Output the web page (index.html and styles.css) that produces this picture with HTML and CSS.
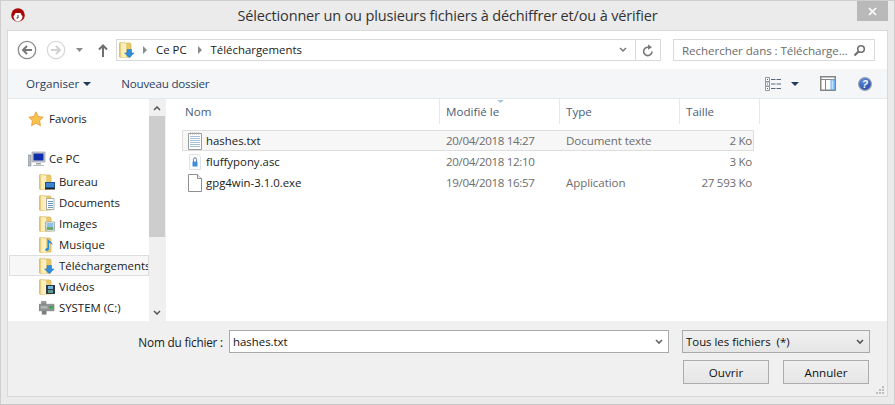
FILE: index.html
```html
<!DOCTYPE html>
<html lang="fr">
<head>
<meta charset="utf-8">
<title>Sélectionner</title>
<link rel="stylesheet" href="styles.css">
</head>
<body>
<svg class="defs" width="0" height="0">
  <defs>
    <linearGradient id="fold" x1="0" y1="0" x2="1" y2="0"><stop offset="0" stop-color="#e6c66c"/><stop offset=".25" stop-color="#f9ebb4"/><stop offset="1" stop-color="#fdf3c8"/></linearGradient>
    <radialGradient id="helpg" cx=".4" cy=".3" r=".8"><stop offset="0" stop-color="#5f8fe0"/><stop offset="1" stop-color="#1c3f9c"/></radialGradient>
    <symbol id="folder" viewBox="0 0 16 16">
      <path d="M.5 1h10.500l1 1v13H.5z" fill="#ebc968" stroke="#d3b257" stroke-width=".7"/>
      <path d="M1 0l6.500 1.500V16L1 15.500z" fill="url(#fold)" stroke="#dcc06c" stroke-width=".5"/>
    </symbol>
    <symbol id="dlarrow" viewBox="0 0 16 16">
      <path d="M8 7.500h4.500v3.500H15l-4.700 4.700L5.600 11H8z" fill="#2f8fdc" stroke="#1f6fb5" stroke-width=".5"/>
    </symbol>
  </defs>
</svg>
<div class="window">
  <header class="titlebar">
    <div class="appicon">
      <svg width="14" height="14" viewBox="0 0 14 14"><circle cx="7" cy="7" r="6.800" fill="#a80808"/><path d="M2.500 8c1-.5 1.500-2 2-3h5c.5 1 1 2.500 2 3 0 3-2 5.500-4.500 5.500S2.500 11 2.500 8z" fill="#fff"/><path d="M7 7v3H5.500" stroke="#333" fill="none"/></svg>
    </div>
    <h1 class="title">Sélectionner un ou plusieurs fichiers à déchiffrer et/ou à vérifier</h1>
    <div class="closewrap"><button class="close"><svg width="9" height="9" viewBox="0 0 9 9"><path d="M1 1l7 7M8 1 1 8" stroke="#fff" stroke-width="1.700"/></svg></button></div>
  </header>
  <main class="panel">
    <nav class="navbar">
      <svg class="navbtn" width="20" height="20" viewBox="0 0 20 20"><circle cx="10" cy="10" r="8.700" fill="#fff" stroke="#8a8a8a" stroke-width="1.300"/><path d="M15 10H6M10 6 6 10l4 4" fill="none" stroke="#777" stroke-width="2"/></svg>
      <svg class="navbtn fwd" width="20" height="20" viewBox="0 0 20 20"><circle cx="10" cy="10" r="8.700" fill="#fff" stroke="#d8d8d8" stroke-width="1.300"/><path d="M5 10h9M10 6l4 4-4 4" fill="none" stroke="#d2d2d2" stroke-width="2"/></svg>
      <svg class="navdrop" width="7" height="4" viewBox="0 0 7 4"><path d="M0 0h7L3.500 4z" fill="#8a8a8a"/></svg>
      <svg class="navup" width="10" height="13" viewBox="0 0 10 13"><path d="M5 13V2M1 5.500 5 1.500l4 4" fill="none" stroke="#6f6f6f" stroke-width="2"/></svg>
      <div class="address">
        <svg class="addr-ico" width="16" height="16"><use href="#folder"/><use href="#dlarrow"/></svg>
        <span class="crumb-arrow"></span>
        <span class="crumb">Ce PC</span>
        <span class="crumb-arrow"></span>
        <span class="crumb">Téléchargements</span>
        <span class="spacer"></span>
        <svg class="addr-chev" width="8" height="6" viewBox="0 0 8 6"><path d="M1 1l3 3 3-3" fill="none" stroke="#777" stroke-width="1.500"/></svg>
        <span class="refresh"><svg width="12" height="13" viewBox="0 0 12 13"><path d="M10 7.500A4.200 4.200 0 1 1 6 3.200" fill="none" stroke="#777" stroke-width="1.600"/><path d="M6 0.500 10 3.200 6 5.800z" fill="#777"/></svg></span>
      </div>
      <div class="search">
        <span class="search-text">Rechercher dans : Télécharge...</span>
        <svg width="13" height="13" viewBox="0 0 13 13"><circle cx="8" cy="5" r="3.300" fill="none" stroke="#6f6f6f" stroke-width="1.600"/><path d="M5.500 7.500 1.500 11.500" stroke="#6f6f6f" stroke-width="2.200"/></svg>
      </div>
    </nav>
    <div class="toolbar">
      <span class="tool">Organiser</span>
      <svg class="tool-caret" width="8" height="4" viewBox="0 0 8 4"><path d="M0 0h8L4 4z" fill="#1e3a5f"/></svg>
      <span class="tool new">Nouveau dossier</span>
      <span class="spacer"></span>
      <svg class="viewico" width="16" height="14" viewBox="0 0 16 14"><path d="M.5.500h4v4h-4zM.5 5h4v4h-4zM.5 9.500h4v4h-4z" fill="#fff" stroke="#8795a5"/><path d="M6 2.500h10M6 7h10M6 11.500h10" stroke="#55677c" stroke-dasharray="4.500 1"/><path d="M2 2h1v1H2zM2 6.500h1v1H2zM2 11h1v1H2z" fill="#c33"/></svg>
      <svg class="view-caret" width="8" height="4" viewBox="0 0 8 4"><path d="M0 0h8L4 4z" fill="#1e3a5f"/></svg>
      <svg class="paneico" width="16" height="15" viewBox="0 0 16 15"><path d="M.75.750h14.500v13.500H.75z" fill="#fff" stroke="#858585" stroke-width="1.500"/><path d="M1 3.500h14M5.500 3.500V14" stroke="#858585"/><path d="M10.500 3.500h4.500V14h-4.500z" fill="#6cb2ee"/><path d="M11.500 4.500h2V13h-2z" fill="#bfe0fa"/></svg>
      <svg class="helpico" width="14" height="14" viewBox="0 0 14 14"><circle cx="7" cy="7" r="6.400" fill="url(#helpg)" stroke="#9aa3b8" stroke-width="1.200"/><text x="7" y="10.500" class="helptext" text-anchor="middle">?</text></svg>
    </div>
    <div class="content">
      <aside class="sidebar">
        <ul class="tree">
          <li class="tree-row fav"><svg width="16" height="16" viewBox="0 0 16 16"><path d="M8 .8l2.200 4.700 5 .7-3.600 3.500.9 5L8 12.300l-4.500 2.400.9-5L.8 6.200l5-.7z" fill="#f8c04c" stroke="#e59a35" stroke-width=".8"/></svg><span>Favoris</span></li>
          <li class="tree-row pc"><svg width="18" height="16" viewBox="0 0 18 16"><path d="M0 4h3v11H0z" fill="#b9bfc4" stroke="#70767c" stroke-width=".5"/><path d="M4 1h13v10H4z" fill="#c9ced4" stroke="#8f969d" stroke-width=".6"/><path d="M5.500 2.500h10v7h-10z" fill="#0e2da8"/><path d="M8 12h5v1.500H8z" fill="#9aa1a8"/><path d="M5 14h11v1H5z" fill="#b5bbc1"/></svg><span>Ce PC</span></li>
          <li class="tree-row sub"><svg width="16" height="16"><use href="#folder"/><path d="M6 8h10v6H6z" fill="#1e4f8f"/><path d="M7 9h8v4H7z" fill="#3d86cc"/><path d="M6 14h10v1.500H6z" fill="#222"/></svg><span>Bureau</span></li>
          <li class="tree-row sub"><svg width="16" height="16"><use href="#folder"/><path d="M7.500 3.500h7.500v11H7.500z" fill="#fff" stroke="#8a8f95" stroke-width=".7"/><path d="M9 6.500h5M9 8.500h5M9 10.500h5M9 12.500h5" stroke="#6f96bd"/></svg><span>Documents</span></li>
          <li class="tree-row sub"><svg width="16" height="16"><use href="#folder"/><path d="M6.500 6h9v9h-9z" fill="#fff" stroke="#8a8f95" stroke-width=".7"/><path d="M7.500 7h7v4h-7z" fill="#8ec3e8"/><path d="M7.500 11h7v3h-7z" fill="#6fa86a"/></svg><span>Images</span></li>
          <li class="tree-row sub"><svg width="16" height="16"><use href="#folder"/><path d="M10 1.500v10.500c0 1.500-2.500 2.500-3.500 1.500S7 11 8.500 11V1.500c1 2 5.500 3.500 5 7-.5-1.500-2-2.500-3.500-2.800z" fill="#2a8bd6"/></svg><span>Musique</span></li>
          <li class="tree-row sub selected"><svg width="16" height="16"><use href="#folder"/><use href="#dlarrow"/></svg><span class="clip">Téléchargements</span></li>
          <li class="tree-row sub"><svg width="16" height="16"><use href="#folder"/><path d="M7 6h9v9H7z" fill="#2d3a45"/><path d="M9 7h5v3H9z" fill="#6fb3dc"/><path d="M9 11h5v3H9z" fill="#5a9a8f"/></svg><span>Vidéos</span></li>
          <li class="tree-row sub drive"><svg width="16" height="16" viewBox="0 0 17 16"><path d="M2.500 1h5v3h-5z" fill="#9a9a9a" stroke="#6a6a6a" stroke-width=".5"/><path d="M0 4h16v7H0z" fill="#8f9494" stroke="#6a6a6a" stroke-width=".5"/><path d="M11 6h4v2.500h-4z" fill="#3aa64a"/><path d="M2 6h7v2.500H2z" fill="#b5b8b8"/><path d="M3 11h5v4H3z" fill="#7a7f7f"/></svg><span>SYSTEM (C:)</span></li>
        </ul>
        <div class="scrollbar">
          <svg class="sb-arrow" width="8" height="5" viewBox="0 0 8 5"><path d="M1 4l3-3 3 3" fill="none" stroke="#555" stroke-width="1.500"/></svg>
          <div class="thumb"></div>
          <span class="spacer"></span>
          <svg class="sb-arrow low" width="8" height="5" viewBox="0 0 8 5"><path d="M1 1l3 3 3-3" fill="none" stroke="#555" stroke-width="1.500"/></svg>
        </div>
      </aside>
      <section class="files">
        <div class="cols head">
          <div class="th name">Nom</div>
          <div class="th date"><svg class="sortmark" width="7" height="3" viewBox="0 0 7 3"><path d="M0 0h7L3.500 3z" fill="#a9c7e2"/></svg>Modifié le</div>
          <div class="th type">Type</div>
          <div class="th size">Taille</div>
        </div>
        <div class="rows">
          <div class="cols row selected">
            <div class="td name"><svg width="16" height="18" viewBox="0 0 16 18"><path d="M1.500 1.500h13v16h-13z" fill="#fff" stroke="#9a9a9a"/><path d="M3 4.500h10M3 6.500h10M3 8.500h10M3 10.500h10M3 12.500h10M3 14.500h10" stroke="#a5c0dc"/><path d="M3 1.500h10" stroke="#a8a8a8" stroke-dasharray="1 1" stroke-width="2"/></svg><span>hashes.txt</span></div>
            <div class="td date">20/04/2018 14:27</div>
            <div class="td type">Document texte</div>
            <div class="td size">2 Ko</div>
          </div>
          <div class="cols row">
            <div class="td name"><svg width="16" height="16" viewBox="0 0 16 16"><path d="M2.500.5h9l2 2v13h-11z" fill="#fbfbfb" stroke="#dde2e6"/><path d="M5.500 7.500h5v5h-5z" fill="#3b8fd6"/><path d="M6.500 7.500V5.300a1.500 1.500 0 0 1 3 0v2.200" fill="none" stroke="#5f7d98" stroke-width="1"/></svg><span>fluffypony.asc</span></div>
            <div class="td date">20/04/2018 12:10</div>
            <div class="td type"></div>
            <div class="td size">3 Ko</div>
          </div>
          <div class="cols row">
            <div class="td name"><svg width="16" height="18" viewBox="0 0 16 18"><path d="M1.500.5h9l4 4v13h-13z" fill="#fff" stroke="#8f8f8f"/><path d="M10.500.5v4h4" fill="#eee" stroke="#8f8f8f"/></svg><span>gpg4win-3.1.0.exe</span></div>
            <div class="td date">19/04/2018 16:57</div>
            <div class="td type">Application</div>
            <div class="td size">27 593 Ko</div>
          </div>
        </div>
      </section>
    </div>
    <footer class="bottom">
      <div class="file-row">
        <label class="file-label">Nom du fichier :</label>
        <div class="combo input"><span class="combo-text">hashes.txt</span><svg width="8" height="6" viewBox="0 0 8 6"><path d="M1 1l3 3 3-3" fill="none" stroke="#666" stroke-width="1.600"/></svg></div>
        <div class="combo filter"><span class="combo-text">Tous les fichiers&nbsp; (*)</span><svg width="8" height="6" viewBox="0 0 8 6"><path d="M1 1l3 3 3-3" fill="none" stroke="#555" stroke-width="1.600"/></svg></div>
      </div>
      <div class="btn-row">
        <button class="btn">Ouvrir</button>
        <button class="btn">Annuler</button>
      </div>
      <svg class="grip" width="10" height="10" viewBox="0 0 10 10"><path d="M7 1h2v2H7zM4 4h2v2H4zM7 4h2v2H7zM1 7h2v2H1zM4 7h2v2H4zM7 7h2v2H7z" fill="#bdbdbd"/></svg>
    </footer>
  </main>
</div>
</body>
</html>
```
FILE: styles.css
```css
* { box-sizing: border-box; }
html, body { margin: 0; padding: 0; }
body { width: 895px; height: 405px; overflow: hidden; font-family: "Open Sans", "Noto Sans", sans-serif; font-size: 12px; color: #111; background: #ebebeb; }
.defs { position: absolute; }
svg { display: block; flex: none; }
.window { width: 895px; height: 405px; display: flex; flex-direction: column; background: #ebebeb; border: 1px solid #cfcfcf; border-bottom-color: #c8c8c8; padding: 0 6px 7px 6px; }
.titlebar { height: 29px; display: grid; grid-template-columns: 1fr auto 1fr; align-items: center; flex: none; }
.appicon { padding-left: 4px; margin-top: -1px; }
.title { margin: 1px 0 0; font-weight: 400; font-size: 14.5px; letter-spacing: -.16px; color: #333; line-height: 20px; white-space: nowrap; }
.closewrap { display: flex; justify-content: flex-end; align-self: start; }
.close { width: 31px; height: 20px; border: 0; margin: 0; padding: 0; background: #b9b9b9; display: flex; align-items: center; justify-content: center; }
.panel { flex: 1; display: flex; flex-direction: column; border: 1px solid #d9d9d9; background: #fff; min-height: 0; }
.navbar { height: 38px; flex: none; display: flex; align-items: center; padding: 0 11px 0 9px; background: #fff; }
.navbtn.fwd { margin-left: 9px; }
.navdrop { margin-left: 10px; }
.navup { margin-left: 15px; }
.address { width: 545px; height: 22px; margin-left: 8px; border: 1px solid #d9d9d9; display: flex; align-items: center; padding-left: 2px; color: #1a1a1a; }
.addr-ico { margin-right: 8px; }
.crumb-arrow { width: 0; height: 0; border-left: 4px solid #8a8a8a; border-top: 4px solid transparent; border-bottom: 4px solid transparent; margin-right: 9px; }
.crumb { margin-right: 11px; font-size: 11.4px; padding-bottom: 2px; }
.spacer { flex: 1; }
.addr-chev { margin-right: 8px; }
.refresh { width: 25px; height: 20px; border-left: 1px solid #d9d9d9; display: flex; align-items: center; justify-content: center; }
.search { width: 202px; height: 22px; margin-left: 12px; border: 1px solid #d9d9d9; display: flex; align-items: center; justify-content: space-between; padding: 0 8px; color: #6d6d6d; font-size: 11.6px; letter-spacing: -.07px; }
.toolbar { height: 30px; flex: none; display: flex; align-items: center; background: #f5f6f7; border-bottom: 1px solid #e5e8ec; padding: 0 15px 0 18px; color: #2c3e63; }
.tool { font-size: 11.6px; }
.tool-caret { margin-left: 4px; }
.tool.new { margin-left: 30px; letter-spacing: -.2px; }
.view-caret { margin-left: 10px; }
.paneico { margin-left: 21px; }
.helpico { margin-left: 22px; }
.helptext { font-size: 10px; font-weight: 700; font-style: italic; fill: #fff; font-family: "Liberation Sans", sans-serif; }
.content { flex: 1; display: flex; min-height: 0; }
.sidebar { width: 157px; flex: none; display: flex; }
.tree { list-style: none; margin: 0; padding: 9px 0 0 1px; width: 141px; overflow: hidden; }
.tree-row { height: 21px; display: flex; align-items: center; gap: 4px; font-size: 11.4px; color: #1a1a1a; white-space: nowrap; }
.tree-row.fav { padding-left: 19px; margin-bottom: 19px; gap: 5px; }
.tree-row.pc { padding-left: 19px; gap: 3px; margin-bottom: 2px; }
.tree-row.sub { padding-left: 29px; }
.tree-row.sub > svg { margin-left: 1px; }
.tree-row.selected { background: #f7f7f7; border: 1px solid #dedede; padding-left: 28px; }
.clip { overflow: hidden; }
.scrollbar { width: 16px; background: #f0f0f0; display: flex; flex-direction: column; align-items: center; }
.sb-arrow { margin: 7px 0 5px; }
.sb-arrow.low { margin: 0 0 6px; }
.thumb { width: 16px; height: 121px; background: #cdcdcd; }
.files { flex: 1; padding-left: 16px; min-width: 0; border-left: 1px solid #f0f0f0; }
.cols { display: grid; grid-template-columns: 258px 120px 120px 80px; }
.head { height: 25px; width: 578px; }
.th { color: #4c607a; font-size: 11.6px; padding: 5px 0 0 6px; border-right: 1px solid #e5e8ee; position: relative; }
.th.name { padding-left: 3px; }
.sortmark { position: absolute; left: 57px; top: 1px; }
.rows { margin-top: 6px; display: flex; flex-direction: column; }
.row { height: 21px; width: 572px; align-items: center; border: 1px solid transparent; grid-template-columns: 257px 120px 120px 73px; }
.row.selected { background: #f7f7f7; border-color: #dedede; }
.td { color: #6d6d6d; font-size: 11.6px; padding-left: 6px; white-space: nowrap; }
.td.date { letter-spacing: -.35px; }
.td.type { letter-spacing: -.1px; }
.td.name { color: #1a1a1a; display: flex; align-items: center; gap: 3px; padding-left: 4px; font-size: 11.4px; }
.td.size { text-align: right; padding: 0 1px 0 0; letter-spacing: -.3px; }
.bottom { height: 75px; flex: none; background: #f0f0f0; padding: 9px 18px 0 0; position: relative; }
.file-row { display: flex; align-items: center; height: 23px; }
.file-label { width: 215px; flex: none; text-align: right; font-size: 11.8px; letter-spacing: -.2px; color: #1a1a1a; }
.combo { height: 23px; flex: none; display: flex; align-items: center; justify-content: space-between; padding: 0 5px 0 3px; border: 1px solid #a9a9a9; font-size: 11.4px; color: #111; }
.combo.input { width: 440px; background: #fff; margin-left: 6px; }
.combo.filter { width: 188px; margin-left: 13px; background: linear-gradient(#f0f0f0, #e6e6e6); }
.btn-row { display: flex; justify-content: flex-end; gap: 14px; margin-top: 7px; }
.btn { width: 86px; height: 24px; border: 1px solid #acacac; background: linear-gradient(#f0f0f0, #e5e5e5); font-family: inherit; font-size: 11.6px; color: #111; padding: 0; }
.grip { position: absolute; right: 2px; bottom: 1px; }
```
